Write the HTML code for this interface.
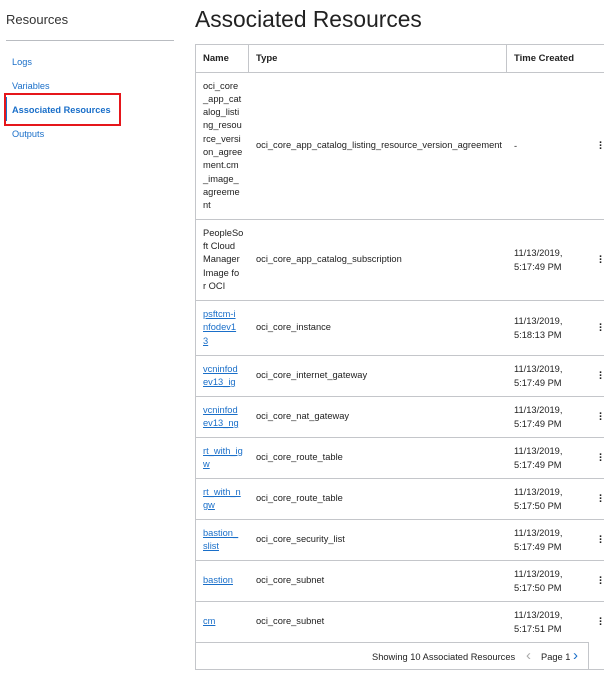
<!DOCTYPE html>
<html><head><style>
*{margin:0;padding:0;box-sizing:border-box}
body{width:604px;height:674px;overflow:hidden;background:#fff;font-family:"Liberation Sans",sans-serif;color:#222;position:relative}
.a{position:absolute}
.side{left:6px;top:12px;font-size:13px;color:#333}
.hr{left:6px;top:40px;width:168px;height:1px;background:#b9bcc1}
.nav{left:12px;font-size:9.2px;color:#1a6fc9}
.red{left:4px;top:93px;width:117px;height:33px;border:2px solid #e5161b}
.bar{left:6px;top:97px;width:1px;height:24px;background:#1a6fc9}
h1{position:absolute;left:195px;top:6px;font-size:22.8px;font-weight:normal;color:#222}
.tbl{left:195px;top:44px;width:420px;height:626px;border:1px solid #c4c6ca;background:#fff}
.row{position:absolute;left:0;width:420px;border-top:1px solid #c4c6ca;font-size:9.3px;line-height:13.3px}
.c{position:absolute;top:0;bottom:0;display:flex;align-items:center}
.n{left:7px;width:42px}
.t{left:60px}
.d{left:318px;line-height:14px}
.k{left:403px;font-weight:bold;font-size:11px;line-height:3px;flex-direction:column;justify-content:center}
.lnk{color:#1a6fc9;text-decoration:underline}
.vl{position:absolute;top:0;width:1px;height:28px;background:#c4c6ca}
.hd{position:absolute;top:8px;font-size:9.5px;font-weight:bold}
.foot{left:195px;top:642px;width:394px;height:28px;border:1px solid #c4c6ca;background:#fff;font-size:9.3px}
</style></head><body>
<div class="a side">Resources</div>
<div class="a hr"></div>
<div class="a nav" style="top:57px">Logs</div>
<div class="a nav" style="top:81px">Variables</div>
<div class="a nav" style="top:105px;font-weight:bold">Associated Resources</div>
<div class="a nav" style="top:129px">Outputs</div>
<div class="a red"></div>
<div class="a bar"></div>
<h1>Associated Resources</h1>
<div class="a tbl">
<div class="vl" style="left:52px"></div><div class="vl" style="left:310px"></div>
<div class="hd" style="left:7px">Name</div><div class="hd" style="left:60px">Type</div><div class="hd" style="left:318px">Time Created</div>

<div class="row" style="top:27px;height:147px"><div class="c n">oci_core<br>_app_cat<br>alog_listi<br>ng_resou<br>rce_versi<br>on_agree<br>ment.cm<br>_image_<br>agreeme<br>nt</div><div class="c t">oci_core_app_catalog_listing_resource_version_agreement</div><div class="c d">-</div><div class="c k">·<br>·<br>·</div></div>

<div class="row" style="top:174px;height:81px"><div class="c n">PeopleSo<br>ft Cloud<br>Manager<br>Image fo<br>r OCI</div><div class="c t">oci_core_app_catalog_subscription</div><div class="c d">11/13/2019,<br>5:17:49 PM</div><div class="c k">·<br>·<br>·</div></div>

<div class="row" style="top:255px;height:55px"><div class="c n"><span class="lnk">psftcm-i<br>nfodev1<br>3</span></div><div class="c t">oci_core_instance</div><div class="c d">11/13/2019,<br>5:18:13 PM</div><div class="c k">·<br>·<br>·</div></div>

<div class="row" style="top:310px;height:41px"><div class="c n"><span class="lnk">vcninfod<br>ev13_ig</span></div><div class="c t">oci_core_internet_gateway</div><div class="c d">11/13/2019,<br>5:17:49 PM</div><div class="c k">·<br>·<br>·</div></div>

<div class="row" style="top:351px;height:41px"><div class="c n"><span class="lnk">vcninfod<br>ev13_ng</span></div><div class="c t">oci_core_nat_gateway</div><div class="c d">11/13/2019,<br>5:17:49 PM</div><div class="c k">·<br>·<br>·</div></div>

<div class="row" style="top:392px;height:41px"><div class="c n"><span class="lnk">rt_with_ig<br>w</span></div><div class="c t">oci_core_route_table</div><div class="c d">11/13/2019,<br>5:17:49 PM</div><div class="c k">·<br>·<br>·</div></div>

<div class="row" style="top:433px;height:41px"><div class="c n"><span class="lnk">rt_with_n<br>gw</span></div><div class="c t">oci_core_route_table</div><div class="c d">11/13/2019,<br>5:17:50 PM</div><div class="c k">·<br>·<br>·</div></div>

<div class="row" style="top:474px;height:41px"><div class="c n"><span class="lnk">bastion_<br>slist</span></div><div class="c t">oci_core_security_list</div><div class="c d">11/13/2019,<br>5:17:49 PM</div><div class="c k">·<br>·<br>·</div></div>

<div class="row" style="top:515px;height:41px"><div class="c n"><span class="lnk">bastion</span></div><div class="c t">oci_core_subnet</div><div class="c d">11/13/2019,<br>5:17:50 PM</div><div class="c k">·<br>·<br>·</div></div>

<div class="row" style="top:556px;height:41px"><div class="c n"><span class="lnk">cm</span></div><div class="c t">oci_core_subnet</div><div class="c d">11/13/2019,<br>5:17:51 PM</div><div class="c k">·<br>·<br>·</div></div>
</div>
<div class="a foot">
<span class="a" style="left:176px;top:9px">Showing 10 Associated Resources</span>
<span class="a" style="left:330px;top:4px;font-size:15px;color:#aaa">‹</span>
<span class="a" style="left:345px;top:9px">Page 1</span>
<span class="a" style="left:377px;top:4px;font-size:15px;color:#1a6fc9">›</span>
</div>
</body></html>
